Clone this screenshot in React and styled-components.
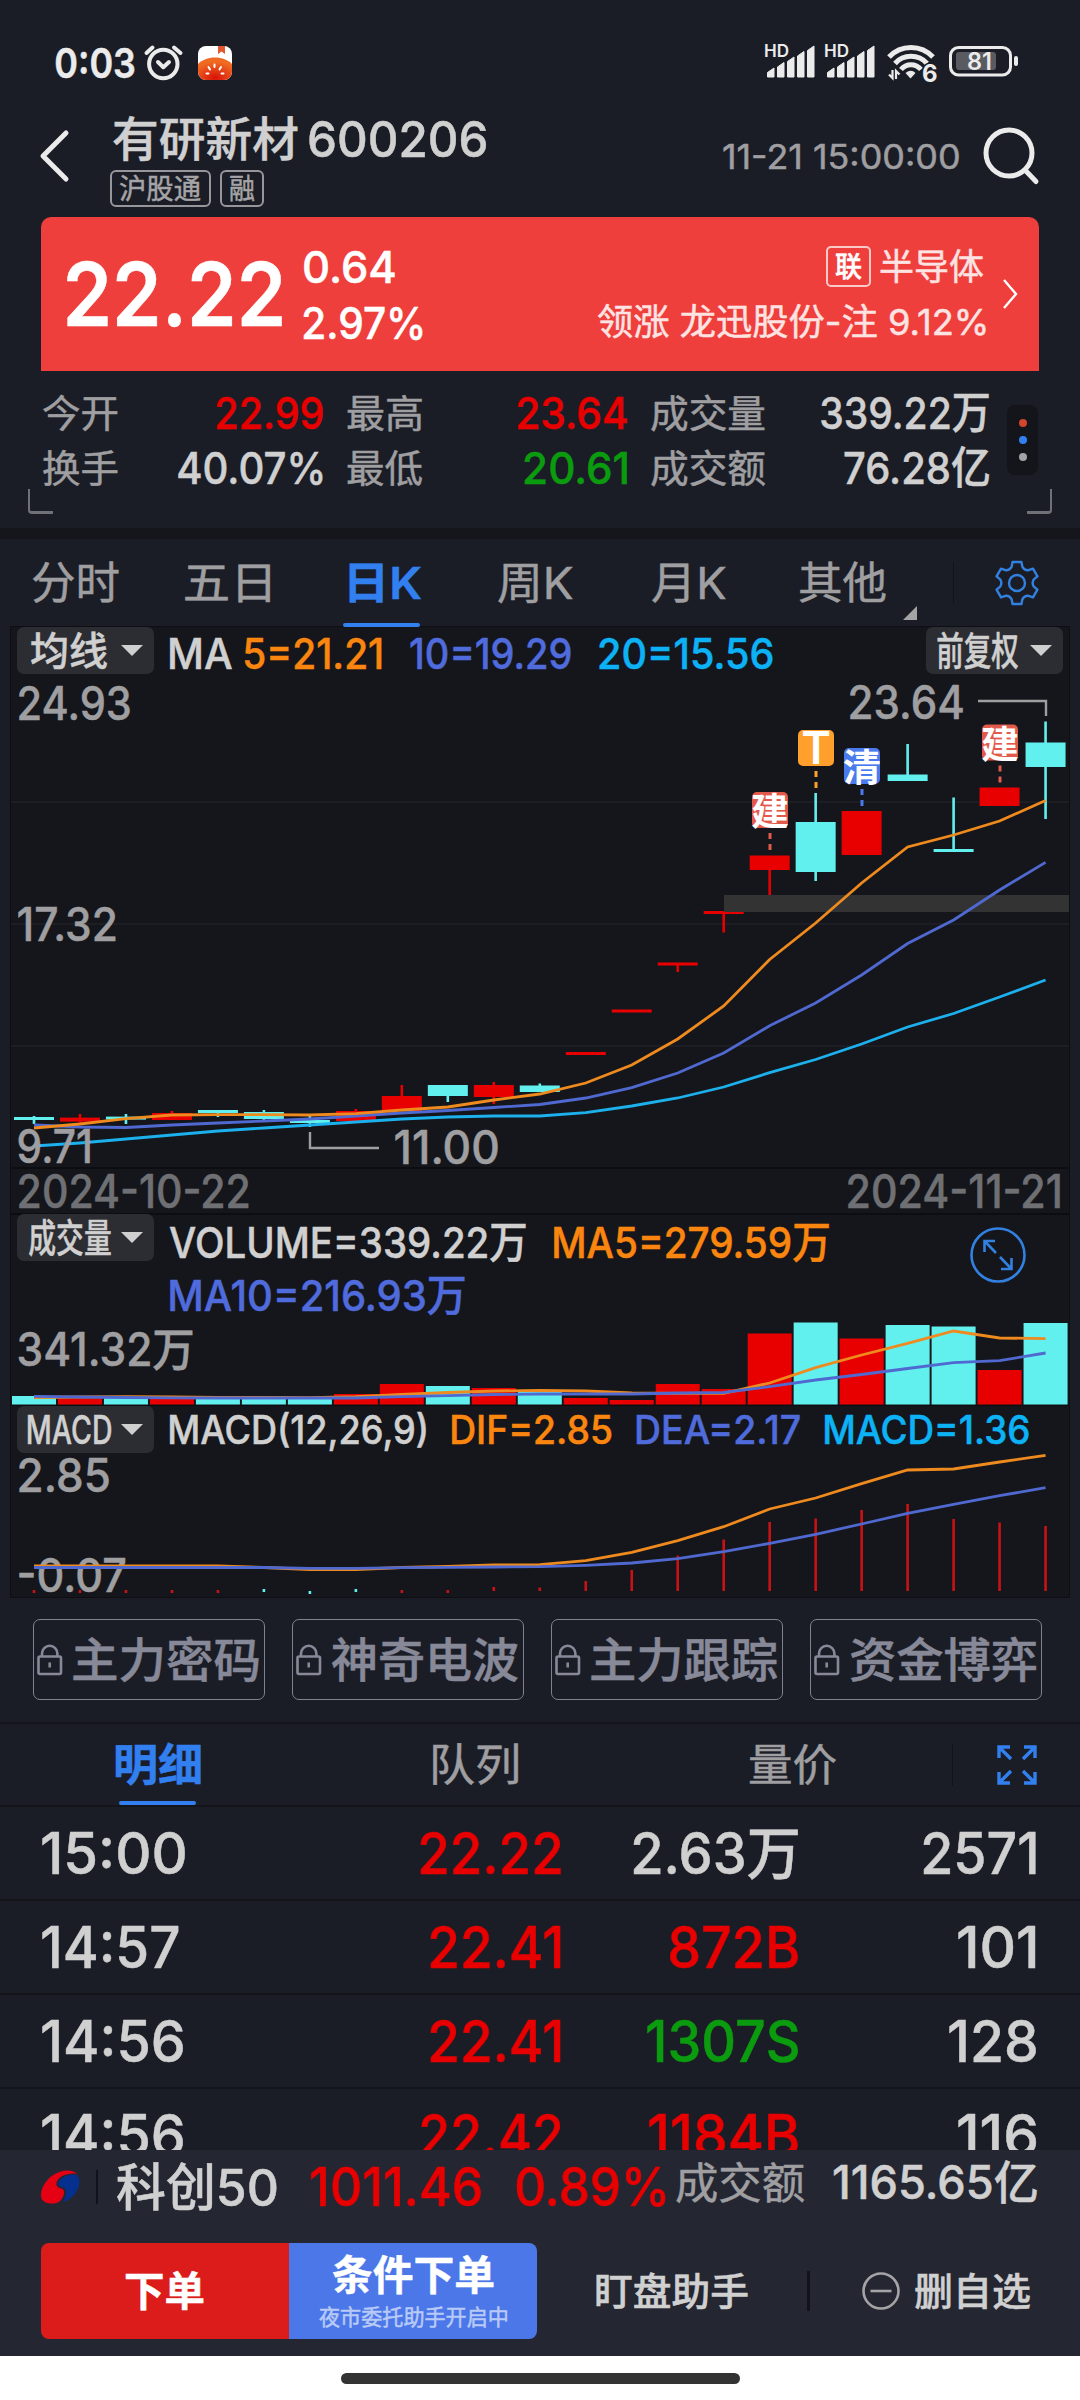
import React, { useLayoutEffect, useRef } from 'react';
import styled, { createGlobalStyle, css } from 'styled-components';

const GlobalStyle = createGlobalStyle`
  :root {
    --bg: #1b1d26;
    --panel: #15161b;
    --bar: #242632;
    --line: #14151b;
    --text: #d0d0d0;
    --grey: #9f9fa1;
    --red: #e80000;
    --green: #0b9b0f;
    --blue: #3280f0;
    --orange: #fb860f;
    --indigo: #4f6bdc;
    --sky: #0cb2f5;
    --cyan: #62f0ef;
  }
  * { box-sizing: border-box; }
  body {
    margin: 0;
    background: var(--bg);
    font-family: Inter, 'Noto Sans CJK SC', sans-serif;
    font-weight: 500;
  }
`;

/* ---------- text that is squeezed to a fixed width ---------- */

const FitBox = styled.span`
  display: inline-block;
  flex: none;
  line-height: 1;
  white-space: nowrap;
  -webkit-text-stroke: 0.5px currentColor;
`;

const FitInner = styled.span`
  display: inline-block;
  transform-origin: 0 50%;
`;

const Fit = ({ w, className, children }) => {
  const box = useRef(null);
  const inner = useRef(null);

  useLayoutEffect(() => {
    const s = getComputedStyle(inner.current);
    const ctx = document.createElement('canvas').getContext('2d');
    ctx.font = `${s.fontWeight} ${s.fontSize} ${s.fontFamily}`;
    const m = ctx.measureText(children);
    const ink = m.actualBoundingBoxLeft + m.actualBoundingBoxRight;
    box.current.style.width = `${w}px`;
    inner.current.style.transform = `scaleX(${w / ink}) translateX(${m.actualBoundingBoxLeft}px)`;
  }, [w, children]);

  return (
    <FitBox ref={box} className={className}>
      <FitInner ref={inner}>{children}</FitInner>
    </FitBox>
  );
};

/* ---------- page ---------- */

const Screen = styled.div`
  width: 1080px;
  height: 2400px;
  display: flex;
  flex-direction: column;
  overflow: hidden;
  background: var(--bg);
  color: var(--text);
  svg {
    display: block;
    flex: none;
    overflow: visible;
  }
`;

const StatusBar = styled.div`
  display: flex;
  align-items: center;
  height: 100px;
  padding: 26px 61px 0 56px;
  flex: none;
`;

const Clock = styled(Fit)`
  font-size: 41px;
  font-weight: 600;
  color: #ebebeb;
`;

const StatusIcons = styled.div`
  margin-left: ${(p) => (p.$end ? 'auto' : '8px')};
`;

const Header = styled.header`
  display: flex;
  height: 117px;
  padding-left: 39px;
  flex: none;
`;

const BackArrow = styled.svg`
  margin: 29px 41px 0 0;
`;

const TitleLine = styled.div`
  display: flex;
  align-items: center;
  gap: 11px;
  height: 53px;
  margin: 12px 0 5px 3px;
`;

const StockName = styled(Fit)`
  font-size: 47px;
`;

const StockCode = styled(Fit)`
  font-size: 50px;
`;

const Tags = styled.div`
  display: flex;
  gap: 9px;
`;

const Tag = styled.span`
  display: flex;
  align-items: center;
  justify-content: center;
  width: ${(p) => p.$width}px;
  height: 37px;
  border: 2px solid #97979b;
  border-radius: 6px;
  font-size: 28px;
  font-weight: 400;
  color: #a5a5a7;
`;

const HeaderTime = styled(Fit)`
  margin: 40px 25px 0 auto;
  font-size: 34px;
  font-weight: 400;
  color: var(--grey);
`;

const SearchIcon = styled.svg`
  margin: 26px 40px 0 0;
`;

const PriceCard = styled.section`
  display: flex;
  align-items: center;
  height: 154px;
  margin: 0 41px;
  padding: 0 21px 0 26px;
  flex: none;
  background: #ef3f3c;
  border-radius: 10px 10px 0 0;
  color: #fff;
`;

const Price = styled(Fit)`
  font-size: 88px;
  font-weight: 600;
`;

const Change = styled.div`
  display: flex;
  flex-direction: column;
  gap: 12px;
  margin: 1px 0 0 22px;
  font-size: 44px;
`;

const Sector = styled.div`
  display: flex;
  flex-direction: column;
  align-items: flex-end;
  margin: 0 16px 0 auto;
  font-weight: 400;
  color: #fde3e2;
`;

const SectorLine = styled.div`
  display: flex;
  align-items: center;
  gap: 9px;
  height: ${(p) => p.$height}px;
  padding-right: ${(p) => p.$inset || 0}px;
  font-size: 36px;
`;

const LinkBadge = styled.span`
  display: flex;
  align-items: center;
  justify-content: center;
  width: 45px;
  height: 41px;
  border: 2px solid #fbc9c8;
  border-radius: 5px;
  font-size: 28px;
  font-weight: 500;
  color: #fff;
`;

const Stats = styled.section`
  display: flex;
  align-items: center;
  height: 157px;
  padding-left: 28px;
  flex: none;
`;

const Corner = styled.i`
  align-self: flex-end;
  width: 25px;
  height: 25px;
  margin-bottom: 14px;
  border: solid #6f7177;
  border-width: ${(p) => (p.$right ? '0 2px 3px 0' : '0 0 3px 2px')};
  border-radius: ${(p) => (p.$right ? '0 0 4px 0' : '0 0 0 4px')};
`;

const StatsGrid = styled.div`
  display: grid;
  grid-template-columns: 77px 203px 24px 77px 203px 24px 115px 223px;
  grid-auto-rows: 55px;
  align-items: center;
  margin: -18px 0 0 -10px;
`;

const StatName = styled(Fit)`
  font-size: 38px;
  font-weight: 400;
  color: var(--grey);
`;

const StatValue = styled(Fit)`
  justify-self: end;
  font-size: 44px;
  font-weight: 450;
  color: ${(p) => p.$color || 'var(--text)'};
`;

const MoreDots = styled.div`
  display: flex;
  flex-direction: column;
  align-items: center;
  justify-content: center;
  gap: 9px;
  width: 31px;
  height: 70px;
  margin: -20px -11px 0 18px;
  border-radius: 8px;
  background: #14151a;
`;

const Dot = styled.i`
  width: 8px;
  height: 8px;
  border-radius: 50%;
  background: ${(p) => p.$color};
`;

const Band = styled.div`
  height: 11px;
  flex: none;
  background: var(--panel);
`;

/* ---------- tabs ---------- */

const TabBar = styled.nav`
  display: flex;
  height: ${(p) => p.$height}px;
  flex: none;
  align-items: center;
  ${(p) =>
    p.$lined &&
    css`
      border: solid var(--line);
      border-width: 2px 0;
    `}
`;

const Tab = styled.div`
  position: relative;
  display: flex;
  align-items: center;
  justify-content: center;
  width: ${(p) => p.$width}px;
  height: 100%;
  padding-left: ${(p) => p.$shift || 0}px;
  font-size: 44px;
  font-weight: ${(p) => (p.$active ? 600 : 400)};
  color: ${(p) => (p.$active ? 'var(--blue)' : 'var(--grey)')};
  &::after {
    content: '';
    display: ${(p) => (p.$active ? 'block' : 'none')};
    position: absolute;
    left: calc(50% - 39px);
    bottom: 0;
    width: 77px;
    height: 4px;
    border-radius: 2px;
    background: var(--blue);
  }
`;

const TabCaret = styled.svg`
  align-self: flex-end;
  margin: 0 36px 7px -14px;
`;

const Separator = styled.i`
  width: 1px;
  height: 42px;
  background: #12131a;
`;

const TabAction = styled.div`
  display: flex;
  justify-content: center;
  flex: 1;
`;

/* ---------- charts ---------- */

const ChartPanel = styled.section`
  width: 1058px;
  margin: 0 auto;
  flex: none;
  background: var(--panel);
  outline: 1px solid #0e0f13;
`;

const Legend = styled.div`
  display: flex;
  align-items: flex-start;
  height: ${(p) => p.$height}px;
  padding: 0 6px 0 6px;
  font-size: ${(p) => p.$size || 42}px;
`;

const Picker = styled.button`
  display: flex;
  align-items: center;
  justify-content: space-between;
  width: 137px;
  height: 47px;
  margin: 0;
  padding: 0 11px 0 ${(p) => p.$pad || 12}px;
  flex: none;
  border: 0;
  border-radius: 7px;
  background: #2c2d32;
  color: var(--text);
  font: inherit;
  font-size: 39px;
  &::after {
    content: '';
    border: 11px solid transparent;
    border-top-color: var(--text);
    border-bottom: 0;
  }
`;

const LegendItems = styled.div`
  display: flex;
  flex-wrap: wrap;
  row-gap: 3px;
  flex: 1;
  padding: ${(p) => p.$top || 0}px 0 0 16px;
`;

const LegendItem = styled(Fit)`
  height: 50px;
  margin-right: ${(p) => p.$gap || 28}px;
  line-height: ${(p) => p.$line || 53}px;
  color: ${(p) => p.$color || 'var(--text)'};
`;

const ZoomIcon = styled.svg`
  margin: 12px 36px 0 0;
`;

const Locks = styled.div`
  display: flex;
  gap: 27px;
  padding: 22px 0 22px 33px;
  flex: none;
`;

const LockButton = styled.button`
  display: flex;
  align-items: center;
  gap: 10px;
  width: 232px;
  height: 81px;
  padding: 0 0 0 3px;
  border: 1.5px solid #7f8290;
  border-radius: 7px;
  background: none;
  color: #878998;
  font: inherit;
  font-size: 47px;
`;

/* ---------- trades ---------- */

const Trades = styled.div`
  height: 343px;
  overflow: hidden;
  flex: none;
`;

const TradeRow = styled.div`
  display: grid;
  grid-template-columns: 219px 300px 237px 238px;
  align-items: center;
  justify-items: end;
  height: 94px;
  padding: 0 44px 0 42px;
  border-bottom: 2px solid var(--line);
`;

const Cell = styled(Fit)`
  font-size: 57px;
  color: ${(p) => p.$color || 'var(--text)'};
  &:first-child {
    justify-self: start;
  }
`;

/* ---------- footer ---------- */

const IndexBar = styled.div`
  display: flex;
  align-items: center;
  height: 74px;
  padding: 0 43px 0 41px;
  flex: none;
  background: var(--bar);
`;

const IndexDivider = styled(Separator)`
  width: 2px;
  height: 34px;
  margin-left: 16px;
`;

const IndexText = styled(Fit)`
  font-size: ${(p) => p.$size}px;
  margin: ${(p) => p.$top || 0}px 0 0 ${(p) => p.$left}px;
  color: ${(p) => p.$color || 'var(--text)'};
  font-weight: ${(p) => p.$weight || 500};
`;

const Actions = styled.div`
  display: flex;
  align-items: center;
  height: 132px;
  padding: 2px 46px 0 41px;
  flex: none;
  background: var(--bar);
`;

const OrderButton = styled.button`
  display: flex;
  flex-direction: column;
  align-items: center;
  justify-content: center;
  gap: 10px;
  flex: none;
  width: 248px;
  height: 96px;
  padding: 0;
  border: 0;
  border-radius: ${(p) => (p.$right ? '0 8px 8px 0' : '8px 0 0 8px')};
  background: ${(p) => p.$color};
  color: #fff;
  font: inherit;
  font-size: 41px;
  font-weight: 700;
`;

const OrderNote = styled(Fit)`
  font-size: 22px;
  font-weight: 400;
  color: #b9caf7;
`;

const ActionText = styled(Fit)`
  margin-left: ${(p) => p.$left}px;
  font-size: 38px;
`;

const ActionDivider = styled(Separator)`
  flex: none;
  width: 3px;
  height: 40px;
  margin: 0 52px 0 59px;
`;

const HomeArea = styled.div`
  display: flex;
  justify-content: center;
  flex: 1;
  padding-top: 17px;
  background: #fff;
`;

const HomePill = styled.i`
  width: 399px;
  height: 11px;
  border-radius: 6px;
  background: #333;
`;

/* ---------- data ---------- */

const UP = '#e80000';
const DOWN = '#62f0ef';

// [up?, body top, body bottom, wick top, wick bottom, volume top, macd top]
const days = [
  [0, 1117, 1120, 1116, 1124, 1396, 1590],
  [1, 1117.6, 1121.6, 1114, 1123, 1398.5, 1590],
  [0, 1116.6, 1119.6, 1114, 1124, 1398, 1590],
  [1, 1113, 1120, 1111, 1120, 1399, 1590],
  [0, 1110, 1113, 1110, 1117, 1398.5, 1590],
  [0, 1112, 1119, 1110, 1120, 1396.5, 1589],
  [0, 1120, 1123, 1116, 1127, 1398.5, 1591],
  [1, 1111, 1121, 1109, 1123, 1394, 1589],
  [1, 1096, 1111, 1085, 1111, 1384, 1590],
  [0, 1085, 1096, 1085, 1102, 1386, 1590],
  [1, 1085, 1097, 1082, 1104, 1388, 1587],
  [0, 1085.5, 1092, 1083.5, 1092, 1391.5, 1587.5],
  [1, 1052, 1055, 1052, 1055, 1398, 1581],
  [1, 1009.5, 1012.5, 1010, 1012, 1400, 1570],
  [1, 962.5, 965.5, 964, 972, 1384, 1555.5],
  [1, 911, 914, 912, 932.5, 1389, 1539.5],
  [1, 855.5, 870, 860, 895, 1333.5, 1522],
  [0, 822, 872, 793, 881, 1322.5, 1518.5],
  [1, 811, 855, 811, 855, 1338.5, 1510],
  [0, 774.5, 781, 744, 780, 1325, 1504],
  [0, 849, 852, 797.5, 851, 1326.5, 1519],
  [1, 787.5, 806, 788, 806, 1370, 1522.5],
  [0, 742.5, 767, 721.5, 819, 1323, 1526],
];

const ma5 = [1128, 1124, 1118.7, 1115, 1114.6, 1114.6, 1115, 1113.6, 1110, 1107, 1100, 1094, 1083, 1065, 1039, 1006, 959.5, 923, 883, 847, 835, 821, 800.5];
const ma10 = [1125, 1127, 1127.5, 1125, 1123, 1121, 1119, 1116, 1113, 1110.5, 1107.5, 1104.5, 1098, 1087.6, 1073, 1053, 1025.7, 1003, 975, 943.5, 920, 890, 862.4];
const ma20 = [1146, 1143, 1139, 1135, 1131, 1128, 1125, 1122, 1119, 1117, 1116, 1116, 1112.6, 1106, 1098, 1087, 1072.7, 1059.5, 1044, 1027, 1013.5, 997, 980];
const vol5 = [1397.5, 1397, 1396.7, 1397, 1397.5, 1397.5, 1397.7, 1396.7, 1394.5, 1392.5, 1391, 1390.3, 1391, 1393, 1393.3, 1393.3, 1383, 1367.7, 1355, 1343.3, 1331, 1338, 1338.6];
const vol10 = [1396.4, 1397, 1397.5, 1397.8, 1398, 1398, 1398, 1398, 1396.7, 1395.7, 1394.5, 1394, 1394, 1394, 1393, 1392.5, 1386.7, 1380, 1374.5, 1368.5, 1362.7, 1360.7, 1353];
const dif = [1566, 1566, 1566, 1566, 1566, 1567.5, 1569.5, 1569.5, 1567.5, 1566.5, 1565, 1564.7, 1560.7, 1552.3, 1540.7, 1526.7, 1509, 1498, 1483.7, 1470, 1469, 1462, 1455.3];
const dea = [1567.5, 1567.5, 1567.5, 1567.5, 1567.5, 1567.5, 1568.3, 1568.3, 1567.7, 1567.3, 1567, 1566.7, 1565.3, 1563, 1558.7, 1551.7, 1543.3, 1534.3, 1524, 1513.3, 1504.3, 1495.7, 1487.7];

const markers = [
  { x: 770, y: 792, text: '建', color: '#e25a4c' },
  { x: 816, y: 730, text: 'T', color: '#ff9f2c' },
  { x: 862, y: 748, text: '清', color: '#4a7bee' },
  { x: 1000, y: 724.5, text: '建', color: '#e25a4c' },
];

const stats = [
  ['今开', 75, '22.99', 106, 'var(--red)'],
  ['最高', 75, '23.64', 109, 'var(--red)'],
  ['成交量', 114, '339.22万', 168],
  ['换手', 75, '40.07%', 145],
  ['最低', 75, '20.61', 102, 'var(--green)'],
  ['成交额', 114, '76.28亿', 145],
];

const trades = [
  ['15:00', 143, '22.22', 141, '2.63万', 165, '2571', 113, 'var(--text)'],
  ['14:57', 137, '22.41', 131, '872B', 128, '101', 78, 'var(--red)'],
  ['14:56', 141, '22.41', 131, '1307S', 151, '128', 87, 'var(--green)'],
  ['14:56', 141, '22.42', 140, '1184B', 149, '116', 78, 'var(--red)'],
];

const cx = (i) => 34 + i * 45.98;

/* ---------- chart parts ---------- */

const Curve = ({ data, color }) => (
  <polyline
    points={data.map((y, i) => `${cx(i)},${y}`).join(' ')}
    fill="none"
    stroke={color}
    strokeWidth="2.8"
  />
);

const AxisText = ({ x, y, w, size = 46, color = '#9f9fa1', children }) => (
  <text
    x={x - size * 0.03}
    y={y}
    fontSize={size}
    fill={color}
    stroke={color}
    strokeWidth="0.5"
    textLength={w + size * 0.07}
    lengthAdjust="spacingAndGlyphs"
  >
    {children}
  </text>
);

const KLines = () => (
  <svg width="1058" height="539" viewBox="11 675 1058 539">
    {[802, 924, 1046].map((y) => (
      <path key={y} d={`M11 ${y}H1069`} stroke="#212227" strokeWidth="1.5" />
    ))}
    <path d="M11 1168H1069M11 1214H1069" stroke="#0c0d10" strokeWidth="2" />
    {days.map(([up, top, bottom, high, low], i) => (
      <g key={i} fill={up ? UP : DOWN}>
        <rect x={cx(i) - 20} y={top} width="40" height={bottom - top} />
        <rect x={cx(i) - 1.3} y={high} width="2.6" height={low - high} />
      </g>
    ))}
    <rect x="724" y="895" width="345" height="17" fill="#333" />
    <Curve data={ma20} color="#1cb0ec" />
    <Curve data={ma10} color="#5069d0" />
    <Curve data={ma5} color="#ef8a1f" />
    {markers.map((m) => (
      <g key={m.x}>
        <rect x={m.x - 18} y={m.y} width="36" height="36" rx="5" fill={m.color} />
        <path d={`M${m.x} ${m.y + 41}v6m0 5v6`} stroke={m.color} strokeWidth="3" />
        <text
          x={m.x}
          y={m.y + (m.text === 'T' ? 34 : 33)}
          textAnchor="middle"
          fontSize={m.text === 'T' ? 45 : 38}
          fontWeight="600"
          fill="#fff"
        >
          {m.text}
        </text>
      </g>
    ))}
    <path d="M978 701H1046V716M310 1132V1148H379" fill="none" stroke="#9f9fa1" strokeWidth="2.4" />
    <AxisText x={18} y={720} w={112}>24.93</AxisText>
    <AxisText x={849} y={718.5} w={114}>23.64</AxisText>
    <AxisText x={18} y={941} w={98}>17.32</AxisText>
    <AxisText x={18} y={1163} w={73}>9.71</AxisText>
    <AxisText x={395} y={1164} w={103}>11.00</AxisText>
    <AxisText x={18} y={1208} w={231} color="#6f7074">2024-10-22</AxisText>
    <AxisText x={847} y={1208} w={214} color="#6f7074">2024-11-21</AxisText>
  </svg>
);

const VolumeBars = () => (
  <svg width="1058" height="86" viewBox="11 1320 1058 86">
    {days.map((d, i) => (
      <rect key={i} x={cx(i) - 22} y={d[5]} width="44" height={1404.5 - d[5]} fill={d[0] ? UP : DOWN} />
    ))}
    <Curve data={vol5} color="#ef8a1f" />
    <Curve data={vol10} color="#5069d0" />
    <path d="M11 1405.5H1069" stroke="#0c0d10" />
    <AxisText x={18} y={1366} w={175}>341.32万</AxisText>
  </svg>
);

const Macd = () => (
  <svg width="1058" height="144" viewBox="11 1453 1058 144">
    {days.map((d, i) => (
      <rect
        key={i}
        x={cx(i) - 1.3}
        y={d[6]}
        width="2.6"
        height={Math.max(1591 - d[6], 3)}
        fill={i > 4 && i < 8 ? DOWN : '#c81215'}
      />
    ))}
    <AxisText x={18} y={1492} w={91}>2.85</AxisText>
    <AxisText x={18} y={1592} w={107}>-0.07</AxisText>
    <Curve data={dif} color="#ef8a1f" />
    <Curve data={dea} color="#5069d0" />
  </svg>
);

/* ---------- icons ---------- */

const AlarmAndApp = () => (
  <svg width="92" height="40" viewBox="143 43 92 40" fill="none" stroke="#ebebeb" strokeWidth="4" strokeLinecap="round" strokeLinejoin="round">
    <circle cx="163.3" cy="64" r="14.2" />
    <path d="M158 62l5.3 5.2 5.7-5.2M146.5 53l6-5.5M174 47.5l6.5 5.5" />
    <defs>
      <radialGradient id="tomato" cx="0.5" cy="0.9" r="0.7">
        <stop offset="0" stopColor="#d81208" />
        <stop offset="1" stopColor="#f06a22" />
      </radialGradient>
    </defs>
    <g stroke="none">
      <rect x="198" y="46" width="34" height="34" rx="8" fill="#fff" />
      <path d="M218 46h7v8l-3.5-2.5-3.500 2.5z" fill="#e2582c" />
      <path d="M198 64c4-4 10-6.5 17-6.5s13 2.5 17 6.5v8a8 8 0 0 1-8 8h-18a8 8 0 0 1-8-8z" fill="url(#tomato)" />
    </g>
    <path d="M214.5 64.5v2.5M208.5 67l1.5 2.5M221 67l-1.5 2.5M206.5 73.5h2M221.5 73.5h2" stroke="#fff" strokeWidth="2" />
  </svg>
);

const Signal = ({ dx }) => (
  <g transform={`translate(${dx} 0)`}>
    {[70.5, 65, 59.5, 54, 48.5].map((y, i) => (
      <path key={y} d={`M${767.5 + i * 10} 79V${y + 4}l6.5-4.5V79z`} strokeWidth="1" strokeLinejoin="round" stroke="#ebebeb" />
    ))}
    <text x="764" y="59" fontSize="17" fontWeight="600" textLength="25" lengthAdjust="spacingAndGlyphs">HD</text>
  </g>
);

const SystemIcons = () => (
  <svg width="256" height="44" viewBox="763 43 256 44" fill="#ebebeb">
    <Signal dx={0} />
    <Signal dx={60} />
    <g fill="none" stroke="#ebebeb" strokeWidth="5">
      <path d="M889 59a30 30 0 0 1 44 0M895 65.500a21.500 21.500 0 0 1 32 0M901 71.500a13 13 0 0 1 20 0" />
    </g>
    <path d="M905.5 75q5.5-4.5 10 0l-5 5.5z" />
    <path d="M892.5 72v8l-3.5-3.5M896 81v-8l3.5 3.5" fill="none" stroke="#ebebeb" strokeWidth="2.2" />
    <text x="922" y="83.5" fontSize="24" fontWeight="700" stroke="#1b1d26" strokeWidth="3" paintOrder="stroke">6</text>
    <rect x="950.5" y="49.5" width="60" height="27.5" rx="8" fill="none" stroke="#ebebeb" strokeWidth="3" />
    <rect x="956" y="54" width="40" height="18" rx="3" fill="#5a5b60" />
    <rect x="1014" y="58" width="4" height="10" rx="2" />
    <text x="967" y="72" fontSize="24" fontWeight="600" textLength="25" lengthAdjust="spacingAndGlyphs">81</text>
  </svg>
);

// six-toothed wheel around 24,24
const gearPath = () => {
  const pt = (r, a) => {
    const t = ((a - 90) * Math.PI) / 180;
    return `${(24 + r * Math.cos(t)).toFixed(2)} ${(24 + r * Math.sin(t)).toFixed(2)}`;
  };
  let d = '';
  for (let i = 0; i < 6; i += 1) {
    const a = i * 60;
    d += `${i ? 'L' : 'M'}${pt(21.5, a - 12)}L${pt(21.5, a + 12)}L${pt(17.2, a + 18)}`;
    d += `Q${pt(14.5, a + 30)} ${pt(17.2, a + 42)}`;
  }
  return `${d}Z`;
};

const Gear = () => (
  <svg width="48" height="48" viewBox="0 0 48 48" fill="none" stroke="#3280e0" strokeWidth="2.4" strokeLinejoin="round">
    <path d={gearPath()} />
    <circle cx="24" cy="24" r="8" />
  </svg>
);

const Lock = () => (
  <svg width="26" height="32" viewBox="0 0 26 32" fill="none" stroke="#878998" strokeWidth="2.6">
    <rect x="1.5" y="12.5" width="22.5" height="17.5" rx="1.5" />
    <path d="M5 12V9.500a7.700 7.700 0 0 1 15.400 0V12M12.700 18.500v5" />
  </svg>
);

const Expand = () => (
  <svg width="40" height="40" viewBox="0 0 40 40" fill="none" stroke="#3280f0" strokeWidth="3.4">
    <path d="M14 14L3 3M2 13V2h11M26 14L37 3M27 2h11v11M14 26L3 37M2 27v11h11M26 26l11 11M38 27v11H27" />
  </svg>
);

const Logo = () => (
  <svg width="39" height="36" viewBox="33 62 117 108">
    <path d="M142 77C128 62 92 62 64 84C40 104 28 132 35 152C44 168 76 170 90 158C102 146 106 128 98 122C86 118 76 116 80 102C86 84 112 72 142 77Z" fill="#e60014" />
    <path d="M84 104C92 86 118 74 140 80C152 88 151 112 138 132C128 148 112 158 98 162C108 146 112 128 104 120C94 114 84 114 84 104Z" fill="#06308e" />
  </svg>
);

/* ---------- app ---------- */

const App = () => (
  <>
    <GlobalStyle />
    <Screen>
      <StatusBar>
        <Clock w={79}>0:03</Clock>
        <StatusIcons>
          <AlarmAndApp />
        </StatusIcons>
        <StatusIcons $end>
          <SystemIcons />
        </StatusIcons>
      </StatusBar>

      <Header>
        <BackArrow width="30" height="54" viewBox="0 0 30 54" fill="none" stroke="#ebebeb" strokeWidth="5" strokeLinecap="round" strokeLinejoin="round">
          <path d="M27 4L4 27l23 23" />
        </BackArrow>
        <div>
          <TitleLine>
            <StockName w={185}>有研新材</StockName>
            <StockCode w={177}>600206</StockCode>
          </TitleLine>
          <Tags>
            <Tag $width={101}>
              <Fit w={81}>沪股通</Fit>
            </Tag>
            <Tag $width={44}>
              <Fit w={25}>融</Fit>
            </Tag>
          </Tags>
        </div>
        <HeaderTime w={236}>11-21 15:00:00</HeaderTime>
        <SearchIcon width="56" height="60" viewBox="984 126 56 60" fill="none" stroke="#ebebeb" strokeWidth="5" strokeLinecap="round">
          <circle cx="1009" cy="153" r="23" />
          <path d="M1025 170l11 11.5" />
        </SearchIcon>
      </Header>

      <PriceCard>
        <Price w={215}>22.22</Price>
        <Change>
          <Fit w={91}>0.64</Fit>
          <Fit w={119}>2.97%</Fit>
        </Change>
        <Sector>
          <SectorLine $height={56} $inset={2}>
            <LinkBadge>
              <Fit w={27}>联</Fit>
            </LinkBadge>
            <Fit w={104}>半导体</Fit>
          </SectorLine>
          <SectorLine $height={55}>
            <Fit w={388}>领涨 龙迅股份-注 9.12%</Fit>
          </SectorLine>
        </Sector>
        <svg width="16" height="32" viewBox="0 0 16 32" fill="none" stroke="#fff" strokeWidth="2.4">
          <path d="M2 2l12 14L2 30" />
        </svg>
      </PriceCard>

      <Stats>
        <Corner />
        <StatsGrid>
          {stats.map(([name, nameWidth, value, width, color], i) => (
            <React.Fragment key={name}>
              <StatName w={nameWidth}>{name}</StatName>
              <StatValue w={width} $color={color}>
                {value}
              </StatValue>
              {i % 3 < 2 && <span />}
            </React.Fragment>
          ))}
        </StatsGrid>
        <MoreDots>
          <Dot $color="#d2452f" />
          <Dot $color="#3280f0" />
          <Dot $color="#a4a4a6" />
        </MoreDots>
        <Corner $right />
      </Stats>
      <Band />

      <TabBar $height={88}>
        <Tab $width={151}><Fit w={87}>分时</Fit></Tab>
        <Tab $width={153}><Fit w={85}>五日</Fit></Tab>
        <Tab $width={156} $active $shift={6}><Fit w={72}>日K</Fit></Tab>
        <Tab $width={150}><Fit w={75}>周K</Fit></Tab>
        <Tab $width={157}><Fit w={74}>月K</Fit></Tab>
        <Tab $width={150}><Fit w={87}>其他</Fit></Tab>
        <TabCaret width="14" height="14" viewBox="0 0 14 14" fill="#a4a4a6">
          <path d="M14 0v14H0z" />
        </TabCaret>
        <Separator />
        <TabAction>
          <Gear />
        </TabAction>
      </TabBar>

      <ChartPanel>
        <Legend $height={48}>
          <Picker $pad={14}><Fit w={76}>均线</Fit></Picker>
          <LegendItems>
            <LegendItem w={62} $gap={13}>MA</LegendItem>
            <LegendItem w={137} $color="var(--orange)">5=21.21</LegendItem>
            <LegendItem w={161} $color="var(--indigo)">10=19.29</LegendItem>
            <LegendItem w={174} $color="var(--sky)">20=15.56</LegendItem>
          </LegendItems>
          <Picker $pad={11}><Fit w={81}>前复权</Fit></Picker>
        </Legend>
        <KLines />
        <Legend $height={106} $size={43}>
          <Picker><Fit w={82}>成交量</Fit></Picker>
          <LegendItems $top={2}>
            <LegendItem w={356}>VOLUME=339.22万</LegendItem>
            <LegendItem w={275} $color="var(--orange)">MA5=279.59万</LegendItem>
            <LegendItem w={295} $color="var(--indigo)">MA10=216.93万</LegendItem>
          </LegendItems>
          <ZoomIcon width="58" height="58" viewBox="0 0 58 58" fill="none" stroke="#3280e0" strokeWidth="2.6">
            <circle cx="29" cy="29" r="26.5" />
            <path d="M15.5 26V15H26M16 15.5l11 11.5M31 31l11 11.500M32 43h10.500V32" />
          </ZoomIcon>
        </Legend>
        <VolumeBars />
        <Legend $height={47} $size={39}>
          <Picker $pad={11}><Fit w={83}>MACD</Fit></Picker>
          <LegendItems>
            <LegendItem w={256} $gap={26} $line={48}>MACD(12,26,9)</LegendItem>
            <LegendItem w={159} $gap={26} $line={48} $color="var(--orange)">DIF=2.85</LegendItem>
            <LegendItem w={163} $gap={25} $line={48} $color="var(--indigo)">DEA=2.17</LegendItem>
            <LegendItem w={204} $gap={1} $line={48} $color="var(--sky)">MACD=1.36</LegendItem>
          </LegendItems>
        </Legend>
        <Macd />
      </ChartPanel>

      <Locks>
        {['主力密码', '神奇电波', '主力跟踪', '资金博弈'].map((name) => (
          <LockButton key={name}>
            <Lock />
            <Fit w={186}>{name}</Fit>
          </LockButton>
        ))}
      </Locks>

      <TabBar $height={85} $lined>
        <Tab $width={316} $active><Fit w={85}>明细</Fit></Tab>
        <Tab $width={318}><Fit w={85}>队列</Fit></Tab>
        <Tab $width={318}><Fit w={86}>量价</Fit></Tab>
        <Separator />
        <TabAction>
          <Expand />
        </TabAction>
      </TabBar>

      <Trades>
        {trades.map(([time, tw, price, pw, vol, vw, count, cw, color], i) => (
          <TradeRow key={i}>
            <Cell w={tw}>{time}</Cell>
            <Cell w={pw} $color="var(--red)">{price}</Cell>
            <Cell w={vw} $color={color}>{vol}</Cell>
            <Cell w={cw}>{count}</Cell>
          </TradeRow>
        ))}
      </Trades>

      <IndexBar>
        <Logo />
        <IndexDivider />
        <IndexText w={160} $size={51} $left={19}>科创50</IndexText>
        <IndexText w={170} $size={53} $left={34} $color="var(--red)">1011.46</IndexText>
        <IndexText w={150} $size={53} $left={35} $color="var(--red)">0.89%</IndexText>
        <IndexText w={128} $size={43} $left={10} $top={-8} $weight={400} $color="var(--grey)">成交额</IndexText>
        <IndexText w={203} $size={46} $left={30} $top={-10}>1165.65亿</IndexText>
      </IndexBar>

      <Actions>
        <OrderButton $color="#dc1b1b"><Fit w={78}>下单</Fit></OrderButton>
        <OrderButton $right $color="#4b77e8">
          <Fit w={161}>条件下单</Fit>
          <OrderNote w={188}>夜市委托助手开启中</OrderNote>
        </OrderButton>
        <ActionText w={152} $left={59}>盯盘助手</ActionText>
        <ActionDivider />
        <svg width="38" height="38" viewBox="0 0 38 38" fill="none" stroke="#a4a4a6" strokeWidth="2.6">
          <circle cx="19" cy="19" r="17.5" />
          <path d="M8.5 19h21" />
        </svg>
        <ActionText w={115} $left={15}>删自选</ActionText>
      </Actions>

      <HomeArea>
        <HomePill />
      </HomeArea>
    </Screen>
  </>
);

export default App;
